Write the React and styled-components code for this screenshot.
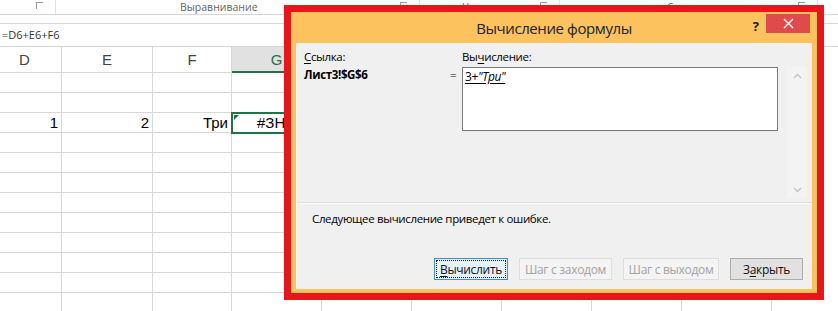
import React from 'react';
import styled, { createGlobalStyle } from 'styled-components';

const GlobalStyle = createGlobalStyle`
  html, body {
    margin: 0;
    padding: 0;
    background: #ffffff;
    overflow: hidden;
  }
  #root {
    width: 838px;
    height: 311px;
  }
`;

const columns = [
  { id: 'D', width: 62 },
  { id: 'E', width: 91 },
  { id: 'F', width: 79 },
  { id: 'G', width: 90, selected: true },
  { id: 'H', width: 90 },
  { id: 'I', width: 90 },
  { id: 'J', width: 90 },
  { id: 'K', width: 90 },
  { id: 'L', width: 90 },
];

const rowCount = 12;

export default function App() {
  return (
    <>
      <GlobalStyle />
      <Screen>
        <Sheet>
          <Ribbon>
            <RibbonGroup $width={56}>
              <Launcher />
            </RibbonGroup>
            <RibbonGroup $width={364}>
              <GroupLabel $offset={124}>Выравнивание</GroupLabel>
              <Launcher />
            </RibbonGroup>
            <RibbonGroup $width={140}>
              <GroupLabel $offset={42}>Число</GroupLabel>
              <Launcher />
            </RibbonGroup>
            <RibbonGroup $width={258}>
              <GroupLabel $offset={107}>Стили</GroupLabel>
              <Launcher />
            </RibbonGroup>
          </Ribbon>
          <FormulaBar>=D6+E6+F6</FormulaBar>
          <Grid>
            <HeaderRow>
              {columns.map((c) => (
                <HeaderCell key={c.id} $width={c.width} $selected={c.selected}>
                  {c.id}
                </HeaderCell>
              ))}
            </HeaderRow>
            {Array.from({ length: rowCount }).map((_, r) => (
              <Row key={r}>
                {columns.map((c) => {
                  const active = r === 2 && c.id === 'G';
                  let value = '';
                  if (r === 2 && c.id === 'D') value = '1';
                  if (r === 2 && c.id === 'E') value = '2';
                  if (r === 2 && c.id === 'F') value = 'Три';
                  return (
                    <Cell key={c.id} $width={c.width} $active={active}>
                      {active ? (
                        <>
                          <ErrorMark />
                          <ErrorValue>#ЗНАЧ!</ErrorValue>
                        </>
                      ) : (
                        value
                      )}
                    </Cell>
                  );
                })}
              </Row>
            ))}
          </Grid>
        </Sheet>

        <Frame>
          <Window>
            <TitleBar>
              <Title>Вычисление формулы</Title>
              <HelpButton>?</HelpButton>
              <CloseButton>
                <svg width="11" height="11" viewBox="0 0 11 11">
                  <path d="M1 1 L10 10 M10 1 L1 10" stroke="#ffffff" strokeWidth="1.4" />
                </svg>
              </CloseButton>
            </TitleBar>
            <Body>
              <EvalArea>
                <RefColumn>
                  <Label>
                    <u>С</u>сылка:
                  </Label>
                  <RefValue>Лист3!$G$6</RefValue>
                </RefColumn>
                <Equals>=</Equals>
                <EvalColumn>
                  <Label>
                    Вы<u>ч</u>исление:
                  </Label>
                  <EvalBox>
                    <EvalText>
                      3+<i>"Три"</i>
                    </EvalText>
                  </EvalBox>
                </EvalColumn>
                <ScrollTrack>
                  <svg width="9" height="6" viewBox="0 0 9 6">
                    <path d="M1 5 L4.5 1.5 L8 5" fill="none" stroke="#c2c2c2" strokeWidth="1.3" />
                  </svg>
                  <svg width="9" height="6" viewBox="0 0 9 6">
                    <path d="M1 1 L4.5 4.5 L8 1" fill="none" stroke="#c2c2c2" strokeWidth="1.3" />
                  </svg>
                </ScrollTrack>
              </EvalArea>
              <Message>Следующее вычисление приведет к ошибке.</Message>
              <ButtonRow>
                <Button $width={74} $focused>
                  <u>В</u>ычислить
                </Button>
                <Button $width={93} disabled>
                  Шаг с заходом
                </Button>
                <Button $width={96} disabled>
                  Шаг с выходом
                </Button>
                <Button $width={73}>
                  З<u>а</u>крыть
                </Button>
              </ButtonRow>
            </Body>
          </Window>
        </Frame>
      </Screen>
    </>
  );
}

const Screen = styled.div`
  position: relative;
  width: 838px;
  height: 311px;
  overflow: hidden;
  background: #ffffff;
`;

const Sheet = styled.div`
  display: flex;
  flex-direction: column;
  width: 838px;
  font-family: 'Liberation Sans', Arial, sans-serif;
`;

const Ribbon = styled.div`
  display: flex;
  height: 14px;
  border-bottom: 1px solid #d6d6d6;
`;

const RibbonGroup = styled.div`
  position: relative;
  flex: 0 0 ${({ $width }) => $width}px;
  display: flex;
  align-items: flex-start;
  justify-content: flex-start;
  border-right: 1px solid #e2e2e2;
  box-sizing: border-box;
`;

const GroupLabel = styled.span`
  margin-left: ${({ $offset }) => $offset}px;
  font-family: 'Open Sans', 'Noto Sans', sans-serif;
  font-size: 10.5px;
  line-height: 14px;
  color: #666666;
  white-space: nowrap;
`;

const Launcher = styled.span`
  position: absolute;
  right: 12px;
  top: 2px;
  width: 7px;
  height: 7px;
  border-left: 1px solid #9a9a9a;
  border-top: 1px solid #9a9a9a;
  box-sizing: border-box;
`;

const FormulaBar = styled.div`
  margin-top: 8px;
  height: 22px;
  border-top: 1px solid #d6d6d6;
  border-bottom: 1px solid #d6d6d6;
  padding-left: 2px;
  font-family: 'Open Sans', 'Noto Sans', sans-serif;
  font-size: 11px;
  line-height: 21px;
  color: #333333;
`;

const Grid = styled.div`
  display: flex;
  flex-direction: column;
`;

const HeaderRow = styled.div`
  display: flex;
  height: 26px;
`;

const HeaderCell = styled.div`
  flex: 0 0 ${({ $width }) => $width}px;
  box-sizing: border-box;
  display: flex;
  align-items: center;
  justify-content: center;
  font-size: 15px;
  color: ${({ $selected }) => ($selected ? '#217346' : '#444444')};
  background: ${({ $selected }) => ($selected ? '#e1e1e1' : '#ffffff')};
  border-right: 1px solid ${({ $selected }) => ($selected ? '#ababab' : '#d8d8d8')};
  border-bottom: ${({ $selected }) => ($selected ? '2px solid #217346' : '1px solid #d8d8d8')};
  &:first-child {
    justify-content: flex-start;
    padding-left: 19px;
  }
`;

const Row = styled.div`
  display: flex;
  height: 20px;
`;

const Cell = styled.div`
  position: relative;
  flex: 0 0 ${({ $width }) => $width}px;
  box-sizing: border-box;
  display: flex;
  align-items: center;
  justify-content: flex-end;
  padding-right: 3px;
  font-size: 15px;
  color: #000000;
  border-right: 1px solid #d8d8d8;
  border-bottom: 1px solid #d8d8d8;
  outline: ${({ $active }) => ($active ? '2px solid #217346' : 'none')};
  outline-offset: -1px;
  z-index: ${({ $active }) => ($active ? 1 : 0)};
`;

const ErrorMark = styled.span`
  position: absolute;
  left: 2px;
  top: 2px;
  width: 0;
  height: 0;
  border-top: 5px solid #217346;
  border-right: 5px solid transparent;
`;

const ErrorValue = styled.span`
  position: absolute;
  left: 25px;
`;

const Frame = styled.div`
  position: absolute;
  z-index: 10;
  left: 284px;
  top: 5px;
  width: 540px;
  height: 295px;
  box-sizing: border-box;
  background: #e8161b;
  padding: 7px;
  display: flex;
`;

const Window = styled.div`
  flex: 1;
  display: flex;
  flex-direction: column;
  background: #fbc25e;
  padding: 0 5px 4px 5px;
`;

const TitleBar = styled.div`
  position: relative;
  height: 31px;
  display: flex;
  align-items: center;
  justify-content: center;
`;

const Title = styled.div`
  font-family: 'Open Sans', 'Noto Sans', sans-serif;
  font-size: 15px;
  letter-spacing: -0.4px;
  color: #222222;
  margin-top: 1px;
`;

const HelpButton = styled.div`
  position: absolute;
  right: 53px;
  top: 5px;
  font-family: 'Open Sans', 'Noto Sans', sans-serif;
  font-weight: 700;
  font-size: 13px;
  color: #1a1a1a;
`;

const CloseButton = styled.div`
  position: absolute;
  right: 2px;
  top: 2px;
  width: 44px;
  height: 19px;
  background: #df4b4b;
  display: flex;
  align-items: center;
  justify-content: center;
`;

const Body = styled.div`
  flex: 1;
  display: flex;
  flex-direction: column;
  background: #f0f0f0;
  border-left: 1px solid #fafafa;
  font-family: 'Open Sans', 'Noto Sans', sans-serif;
  font-size: 11.5px;
  letter-spacing: -0.35px;
  color: #000000;
`;

const EvalArea = styled.div`
  display: flex;
  height: 160px;
  box-sizing: border-box;
  padding: 6px 5px 4px 7px;
  border-bottom: 1px solid #dcdcdc;
`;

const RefColumn = styled.div`
  flex: 0 0 146px;
  display: flex;
  flex-direction: column;
`;

const Label = styled.div`
  height: 16px;
  line-height: 16px;
  u {
    text-decoration-thickness: 1px;
    text-underline-offset: 2px;
  }
`;

const RefValue = styled.div`
  margin-top: 2px;
  font-weight: 700;
  line-height: 16px;
`;

const Equals = styled.div`
  flex: 0 0 12px;
  padding-top: 18px;
  line-height: 16px;
`;

const EvalColumn = styled.div`
  flex: 0 0 316px;
  display: flex;
  flex-direction: column;
`;

const EvalBox = styled.div`
  margin-top: 2px;
  height: 64px;
  box-sizing: border-box;
  background: #ffffff;
  border: 1px solid #7a7a7a;
  padding: 1px 2px;
`;

const EvalText = styled.span`
  font-size: 12px;
  line-height: 16px;
  text-decoration: underline;
  text-underline-offset: 2px;
`;

const ScrollTrack = styled.div`
  margin-left: 9px;
  margin-top: 18px;
  width: 20px;
  height: 131px;
  background: #f3f3f3;
  display: flex;
  flex-direction: column;
  align-items: center;
  justify-content: space-between;
  padding: 6px 0 5px;
  box-sizing: border-box;
`;

const Message = styled.div`
  padding: 7px 0 0 15px;
  line-height: 16px;
  border-top: 1px solid #fbfbfb;
`;

const ButtonRow = styled.div`
  margin-top: auto;
  display: flex;
  justify-content: flex-end;
  gap: 11px;
  padding: 0 9px 9px 0;
`;

const buttonBackground = ({ disabled, $focused }) => {
  if (disabled) return '#f4f4f4';
  if ($focused) return '#e5f1fb';
  return '#e1e1e1';
};

const buttonBorder = ({ disabled, $focused }) => {
  if (disabled) return '#dedede';
  if ($focused) return '#3c8fd8';
  return '#adadad';
};

const Button = styled.button`
  width: ${({ $width }) => $width}px;
  height: 22px;
  padding: 0;
  font-family: 'Open Sans', 'Noto Sans', sans-serif;
  font-size: 12px;
  letter-spacing: -0.3px;
  color: ${({ disabled }) => (disabled ? '#a3a3a3' : '#111111')};
  background: ${buttonBackground};
  border: 1px solid ${buttonBorder};
  outline: ${({ $focused }) => ($focused ? '1px dotted #222222' : 'none')};
  outline-offset: -3px;
  u {
    text-underline-offset: 2px;
  }
`;
